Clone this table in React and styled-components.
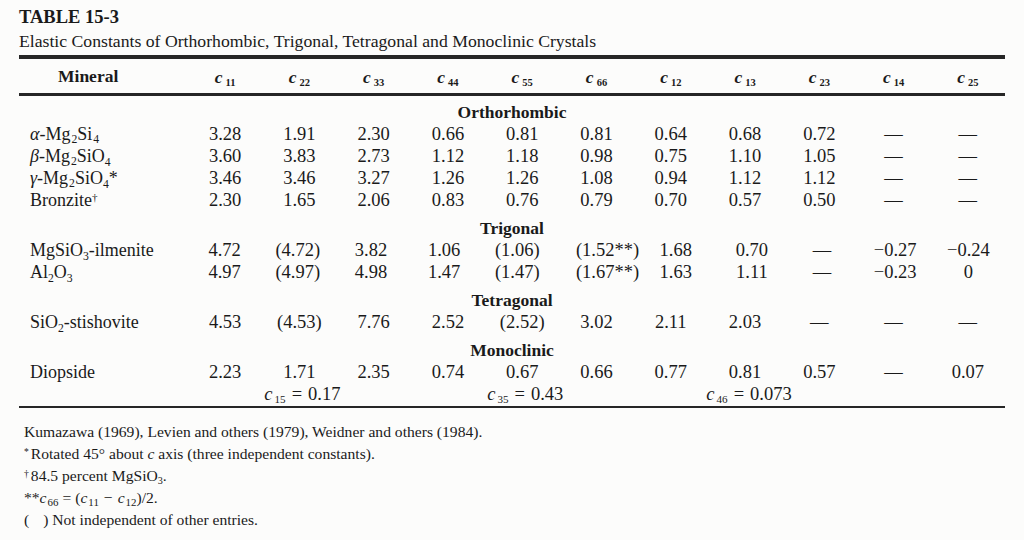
import React from "react";
import styled, { createGlobalStyle } from "styled-components";

const Global = createGlobalStyle`
  html, body { margin: 0; padding: 0; background: #fcfcfb; }
  body { font-family: "Liberation Serif", "Times New Roman", serif; color: #1a1a1a; }
`;

const Page = styled.div`
  width: 1024px;
  height: 540px;
  padding: 7px 19px 0 19px;
  box-sizing: border-box;
  overflow: hidden;
`;

const Title = styled.div`
  font-weight: bold;
  font-size: 18.5px;
  line-height: 20px;
`;

const Subtitle = styled.div`
  font-size: 17.7px;
  line-height: 20px;
  margin-top: 4px;
`;

const Rule = styled.div`
  width: 986px;
  height: ${(p) => p.$h}px;
  background: #262626;
  margin-top: ${(p) => p.$mt || 0}px;
`;

const COLS = "169px repeat(11, 1fr)";

const HeaderRow = styled.div`
  display: grid;
  grid-template-columns: ${COLS};
  width: 986px;
  height: 34px;
  align-items: center;
  font-weight: bold;
  font-size: 17.5px;
`;

const HeadName = styled.div`
  padding-left: 39px;
`;

const HeadSym = styled.div`
  text-align: center;
  font-style: italic;
  font-weight: bold;
  padding-top: 2px;
`;

const Sub = styled.sub`
  font-size: ${(p) => p.$size || 0.65}em;
  vertical-align: -0.3em;
  line-height: 0;
  font-style: normal;
  margin-left: ${(p) => p.$gap || 0}px;
`;

const Sup = styled.sup`
  font-size: 0.62em;
  vertical-align: 0.45em;
  line-height: 0;
  margin-right: ${(p) => p.$gap || 0}px;
`;

const Eq = styled.span`
  margin: 0 ${(p) => p.$space}px;
`;

const Section = styled.div`
  width: 986px;
  text-align: center;
  font-weight: bold;
  font-size: 17.5px;
  line-height: 22px;
  padding-top: ${(p) => p.$pt}px;
`;

const Row = styled.div`
  display: grid;
  grid-template-columns: ${COLS};
  width: 986px;
  height: 22px;
  align-items: center;
  font-size: 18.5px;
  line-height: 22px;
`;

const Name = styled.div`
  padding-left: 11px;
  white-space: nowrap;
  font-size: 18px;
`;

const Cell = styled.div`
  display: flex;
  justify-content: center;
  white-space: nowrap;
  padding-left: ${(p) => (p.$nudge || 0) * 2}px;
`;

const Note = styled.div`
  grid-column: ${(p) => p.$col - 1} / span 3;
  display: flex;
  justify-content: center;
  white-space: nowrap;
  padding-left: ${(p) => (p.$nudge || 0) * 2}px;
`;

const Var = styled.i``;

const Greek = styled.i`
  font-style: italic;
`;

const Footnotes = styled.div`
  margin-top: 13px;
  padding-left: 5px;
  font-size: 15.6px;
  line-height: 22px;
`;

const FootLine = styled.div`
  white-space: nowrap;
`;

const Gap = styled.span`
  display: inline-block;
  width: ${(p) => p.$w}px;
`;

const Sym = ({ n, gap = 1, size }) => (
  <>
    <Var>c</Var>
    <Sub $gap={gap} $size={size}>
      {n}
    </Sub>
  </>
);

const headers = ["11", "22", "33", "44", "55", "66", "12", "13", "23", "14", "25"];

const D = "—";

const groups = [
  {
    title: "Orthorhombic",
    pt: 5,
    rows: [
      {
        name: (
          <>
            <Greek>α</Greek>-Mg<Sub $gap={1}>2</Sub>Si<Sub $gap={1}>4</Sub>
          </>
        ),
        v: ["3.28", "1.91", "2.30", "0.66", "0.81", "0.81", "0.64", "0.68", "0.72", D, D],
      },
      {
        name: (
          <>
            <Greek>β</Greek>-Mg<Sub $gap={1}>2</Sub>SiO<Sub>4</Sub>
          </>
        ),
        v: ["3.60", "3.83", "2.73", "1.12", "1.18", "0.98", "0.75", "1.10", "1.05", D, D],
      },
      {
        name: (
          <>
            <Greek>γ</Greek>-Mg<Sub $gap={1}>2</Sub>SiO<Sub>4</Sub>*
          </>
        ),
        v: ["3.46", "3.46", "3.27", "1.26", "1.26", "1.08", "0.94", "1.12", "1.12", D, D],
      },
      {
        name: (
          <>
            Bronzite<Sup>†</Sup>
          </>
        ),
        v: ["2.30", "1.65", "2.06", "0.83", "0.76", "0.79", "0.70", "0.57", "0.50", D, D],
      },
    ],
  },
  {
    title: "Trigonal",
    pt: 6,
    rows: [
      {
        name: (
          <>
            MgSiO<Sub>3</Sub>-ilmenite
          </>
        ),
        v: ["4.72", "(4.72)", "3.82", "1.06", "(1.06)", ["(1.52**)", 11], "1.68", ["0.70", 3], D, "−0.27", "−0.24"],
      },
      {
        name: (
          <>
            Al<Sub>2</Sub>O<Sub>3</Sub>
          </>
        ),
        v: ["4.97", "(4.97)", "4.98", "1.47", "(1.47)", ["(1.67**)", 11], "1.63", ["1.11", 3], D, "−0.23", ["0", -6]],
      },
    ],
  },
  {
    title: "Tetragonal",
    pt: 6,
    rows: [
      {
        name: (
          <>
            SiO<Sub>2</Sub>-stishovite
          </>
        ),
        v: ["4.53", "(4.53)", "7.76", "2.52", "(2.52)", "3.02", "2.11", "2.03", D, D, D],
      },
    ],
  },
  {
    title: "Monoclinic",
    pt: 6,
    rows: [
      {
        name: <>Diopside</>,
        v: ["2.23", "1.71", "2.35", "0.74", "0.67", "0.66", "0.77", "0.81", "0.57", D, "0.07"],
      },
    ],
    notes: [
      { col: 3, n: "15", val: "0.17", nudge: 3 },
      { col: 6, n: "35", val: "0.43", nudge: 3 },
      { col: 9, n: "46", val: "0.073", nudge: 4 },
    ],
  },
];

export default function App() {
  return (
    <Page>
      <Global />
      <Title>TABLE 15-3</Title>
      <Subtitle>
        Elastic Constants of Orthorhombic, Trigonal, Tetragonal and Monoclinic Crystals
      </Subtitle>
      <Rule $h={4} $mt={4} />
      <HeaderRow>
        <HeadName>Mineral</HeadName>
        {headers.map((h) => (
          <HeadSym key={h}>
            <Sym n={h} gap={3} size={0.6} />
          </HeadSym>
        ))}
      </HeaderRow>
      <Rule $h={2.5} />
      {groups.map((g) => (
        <React.Fragment key={g.title}>
          <Section $pt={g.pt}>{g.title}</Section>
          {g.rows.map((r, i) => (
            <Row key={i}>
              <Name>{r.name}</Name>
              {r.v.map((val, j) => {
                const [text, nudge] = Array.isArray(val) ? val : [val, 0];
                return (
                  <Cell key={j} $nudge={nudge}>
                    {text}
                  </Cell>
                );
              })}
            </Row>
          ))}
          {g.notes && (
            <Row>
              {g.notes.map((n) => (
                <Note key={n.n} $col={n.col} $nudge={n.nudge}>
                  <span>
                    <Sym n={n.n} gap={2} size={0.6} />
                    <Eq $space={6}>=</Eq>
                    {n.val}
                  </span>
                </Note>
              ))}
            </Row>
          )}
        </React.Fragment>
      ))}
      <Rule $h={2.5} $mt={1} />
      <Footnotes>
        <FootLine>Kumazawa (1969), Levien and others (1979), Weidner and others (1984).</FootLine>
        <FootLine>
          <Sup $gap={2}>*</Sup>Rotated 45° about <Var>c</Var> axis (three independent constants).
        </FootLine>
        <FootLine>
          <Sup $gap={2}>†</Sup>84.5 percent MgSiO<Sub>3</Sub>.
        </FootLine>
        <FootLine>
          **<Sym n="66" gap={1} size={0.7} />
          <Eq $space={4}>=</Eq>(<Sym n="11" gap={1} size={0.7} />
          <Eq $space={5}>−</Eq>
          <Sym n="12" gap={1} size={0.7} />)/2.
        </FootLine>
        <FootLine>
          (<Gap $w={14} />) Not independent of other entries.
        </FootLine>
      </Footnotes>
    </Page>
  );
}
